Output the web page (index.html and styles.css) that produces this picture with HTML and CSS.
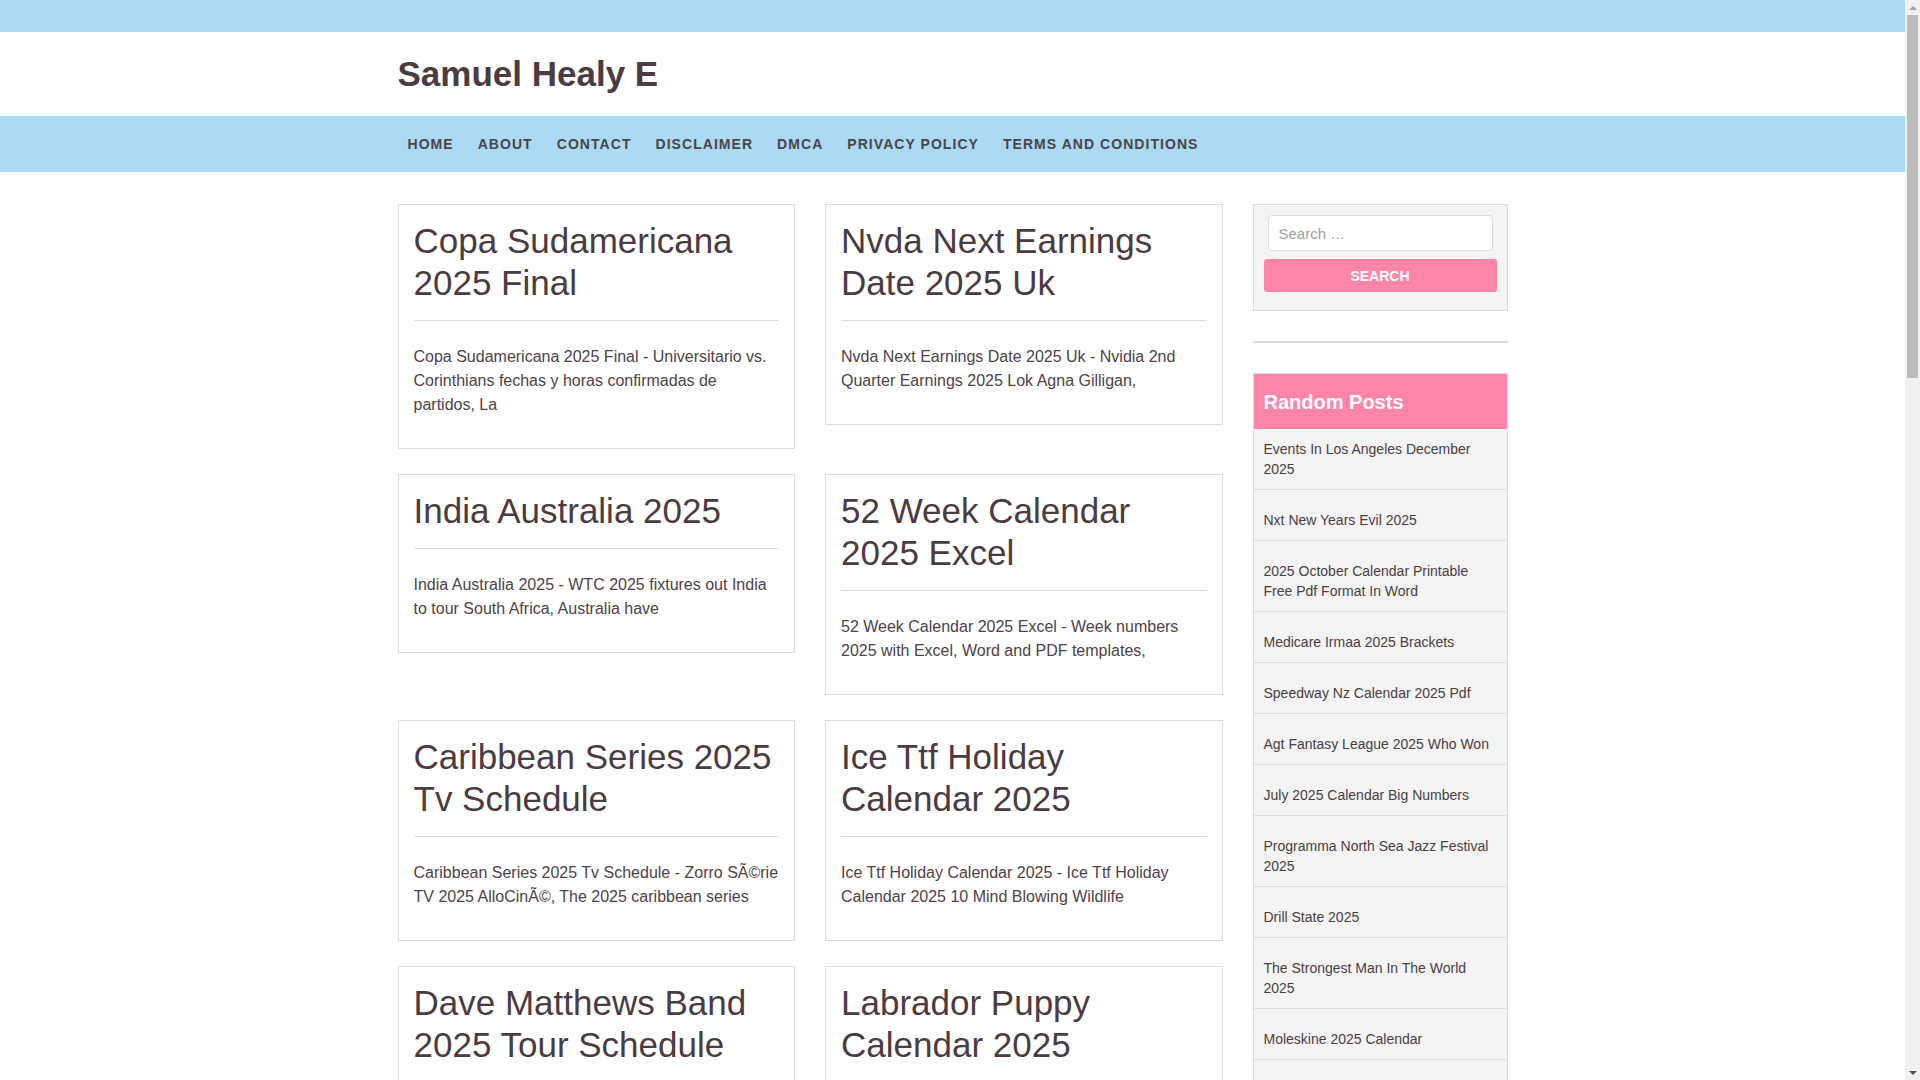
FILE: index.html
```html
<!DOCTYPE html>
<html lang="en">
<head>
<meta charset="UTF-8">
<meta name="viewport" content="width=device-width, initial-scale=1.0">
<title>Samuel Healy E</title>
<link rel="stylesheet" href="styles.css">
</head>

<body>

<div class="top-bar"></div>

<header class="site-header">
  <div class="container">
    <h1 class="site-title"><a href="#">Samuel Healy E</a></h1>
  </div>
</header>

<nav class="main-nav">
  <div class="container">
    <ul>
      <li><a href="#">Home</a></li>
      <li><a href="#">About</a></li>
      <li><a href="#">Contact</a></li>
      <li><a href="#">Disclaimer</a></li>
      <li><a href="#">DMCA</a></li>
      <li><a href="#">Privacy Policy</a></li>
      <li><a href="#">Terms and Conditions</a></li>
    </ul>
  </div>
</nav>

<div class="container site-main">
  <main class="post-grid">
    <article class="post-card">
      <h2><a href="#">Copa Sudamericana 2025 Final</a></h2>
      <hr>
      <p>Copa Sudamericana 2025 Final - Universitario vs. Corinthians fechas y horas confirmadas de partidos, La</p>
    </article>
    <article class="post-card">
      <h2><a href="#">Nvda Next Earnings Date 2025 Uk</a></h2>
      <hr>
      <p>Nvda Next Earnings Date 2025 Uk - Nvidia 2nd Quarter Earnings 2025 Lok Agna Gilligan,</p>
    </article>
    <article class="post-card">
      <h2><a href="#">India Australia 2025</a></h2>
      <hr>
      <p>India Australia 2025 - WTC 2025 fixtures out India to tour South Africa, Australia have</p>
    </article>
    <article class="post-card">
      <h2><a href="#">52 Week Calendar 2025 Excel</a></h2>
      <hr>
      <p>52 Week Calendar 2025 Excel - Week numbers 2025 with Excel, Word and PDF templates,</p>
    </article>
    <article class="post-card">
      <h2><a href="#">Caribbean Series 2025 Tv Schedule</a></h2>
      <hr>
      <p>Caribbean Series 2025 Tv Schedule - Zorro SÃ©rie TV 2025 AlloCinÃ©, The 2025 caribbean series</p>
    </article>
    <article class="post-card">
      <h2><a href="#">Ice Ttf Holiday Calendar 2025</a></h2>
      <hr>
      <p>Ice Ttf Holiday Calendar 2025 - Ice Ttf Holiday Calendar 2025 10 Mind Blowing Wildlife</p>
    </article>
    <article class="post-card">
      <h2><a href="#">Dave Matthews Band 2025 Tour Schedule</a></h2>
      <hr>
      <p>Dave Matthews Band 2025 Tour Schedule - Dave Matthews Band announces 2025 summer tour dates,</p>
    </article>
    <article class="post-card">
      <h2><a href="#">Labrador Puppy Calendar 2025</a></h2>
      <hr>
      <p>Labrador Puppy Calendar 2025 - Labrador Retriever Puppies Calendar 2025 Wall Calendar,</p>
    </article>
    <article class="post-card">
      <h2><a href="#">Nfl Playoff Schedule 2025</a></h2>
      <hr>
      <p>Nfl Playoff Schedule 2025 - NFL playoff bracket 2025 schedule, dates and times,</p>
    </article>
    <article class="post-card">
      <h2><a href="#">Lunar New Year 2025 Animal</a></h2>
      <hr>
      <p>Lunar New Year 2025 Animal - Year of the Snake 2025 what it means and how to celebrate,</p>
    </article>
  </main>

  <aside class="sidebar">
    <div class="widget search-widget">
      <input type="search" placeholder="Search &hellip;">
      <button type="button">Search</button>
    </div>

    <div class="divider"></div>

    <div class="widget posts-widget">
      <h3>Random Posts</h3>
      <ul>
        <li><a href="#">Events In Los Angeles December 2025</a></li>
        <li><a href="#">Nxt New Years Evil 2025</a></li>
        <li><a href="#">2025 October Calendar Printable Free Pdf Format In Word</a></li>
        <li><a href="#">Medicare Irmaa 2025 Brackets</a></li>
        <li><a href="#">Speedway Nz Calendar 2025 Pdf</a></li>
        <li><a href="#">Agt Fantasy League 2025 Who Won</a></li>
        <li><a href="#">July 2025 Calendar Big Numbers</a></li>
        <li><a href="#">Programma North Sea Jazz Festival 2025</a></li>
        <li><a href="#">Drill State 2025</a></li>
        <li><a href="#">The Strongest Man In The World 2025</a></li>
        <li><a href="#">Moleskine 2025 Calendar</a></li>
        <li><a href="#">Nba Draft 2025 Mock</a></li>
        <li><a href="#">Vans Warped Tour 2025 Lineup</a></li>
        <li><a href="#">Printable 2025 Monthly Calendar</a></li>
      </ul>
    </div>
  </aside>
</div>

<!-- window scrollbar, drawn since the page is shot without one -->
<div class="scrollbar">
  <span class="arrow arrow-up"></span>
  <span class="thumb"></span>
  <span class="track"></span>
  <span class="arrow arrow-down"></span>
</div>

</body>
</html>
```

FILE: styles.css
```css
* { box-sizing: border-box; }
body { margin: 0; padding-right: 15px; font-family: "Liberation Sans", Arial, sans-serif; color: #4b3d44; background: #fff; }
a { color: inherit; text-decoration: none; }

.container { width: 1140px; margin: 0 auto; padding: 0 15px; }

.top-bar { height: 32px; background-color: #acd9f4; }

.site-header .container { height: 84px; display: flex; align-items: center; }
.site-title { margin: 0; font-size: 35px; font-weight: bold; line-height: 1.2; color: #4b3b43; }

.main-nav { background-color: #acd9f4; }
.main-nav ul { list-style: none; margin: 0 0 0 -2px; padding: 0; display: flex; height: 56px; align-items: center; }
.main-nav a { display: block; padding: 0 12px; font-size: 14px; font-weight: bold; letter-spacing: 1.05px; text-transform: uppercase; color: #4a4548; line-height: 56px; }

.site-main { display: grid; grid-template-columns: 825px 255px; column-gap: 30px; align-items: start; padding-top: 32px; padding-bottom: 40px; }

.post-grid { display: grid; grid-template-columns: 1fr 1fr; column-gap: 30px; row-gap: 25px; align-items: start; }
.post-card { border: 1px solid #ddd; padding: 15px 15px 15px; }
.post-card h2 { margin: 0; font-size: 35px; font-weight: normal; line-height: 42px; color: #4b3b43; }
.post-card hr { border: 0; border-top: 1px solid #ddd; margin: 16px 0 24px; }
.post-card p { margin: 0 0 16px; font-size: 16px; line-height: 24px; color: #4f4248; }

.widget { background-color: #f4f4f4; border: 1px solid #ddd; }

.search-widget { padding: 10px 10px 18px; }
.search-widget input { display: block; width: calc(100% - 8px); height: 36px; margin: 0 4px 8px; padding: 0 10px; border: 1px solid #ddd; border-radius: 4px; background: #fff; font-family: inherit; font-size: 15px; color: #4b3d44; }
.search-widget input::placeholder { color: #9aa3a6; }
.search-widget button { display: block; width: 100%; height: 33px; border: none; border-radius: 3px; background-color: #ff85ab; color: #fff; font-family: inherit; font-size: 14px; font-weight: bold; text-transform: uppercase; cursor: pointer; }

.divider { height: 2px; background-color: #ddd; margin: 30px 0; }

.posts-widget h3 { margin: 0; padding: 16px 10px 15px; background-color: #ff85ab; color: #fff; font-size: 20px; line-height: 24px; }
.posts-widget ul { list-style: none; margin: 0; padding: 0; }
.posts-widget li { padding: 20px 10px 10px; border-bottom: 1px solid #ddd; font-size: 14px; line-height: 20px; }
.posts-widget li:first-child { padding-top: 10px; }
.posts-widget li:last-child { border-bottom: none; }

.scrollbar { position: fixed; top: 0; right: 0; width: 15px; height: 100vh; background-color: #f1f1f1; display: flex; flex-direction: column; align-items: center; }
.scrollbar .arrow { flex: none; width: 15px; height: 15px; display: flex; justify-content: center; align-items: center; }
.scrollbar .arrow::before { content: ""; border-left: 4px solid transparent; border-right: 4px solid transparent; }
.scrollbar .arrow-up::before { border-bottom: 4px solid #a3a3a3; }
.scrollbar .arrow-down::before { border-top: 4px solid #505050; }
.scrollbar .thumb { flex: none; width: 11px; height: 363px; background-color: #bcbcbc; }
.scrollbar .track { flex: 1; }
```
